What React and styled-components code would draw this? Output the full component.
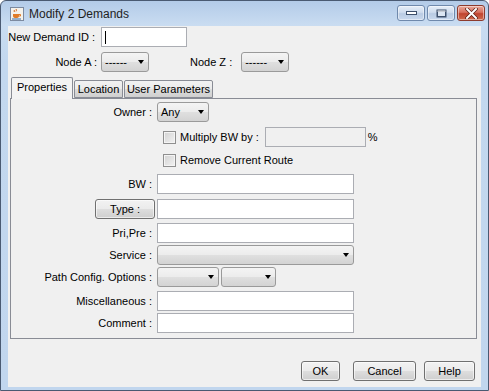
import React from 'react'
import styled, { createGlobalStyle } from 'styled-components'

const Global = createGlobalStyle`
  html, body { margin: 0; padding: 0; background: #fff; }
  body {
    font-family: "Liberation Sans", Arial, sans-serif;
    font-size: 11px;
    color: #000;
  }
  * { box-sizing: border-box; }
`

const Frame = styled.div`
  width: 489px;
  height: 391px;
  display: flex;
  flex-direction: column;
  border: 1px solid #4a5a72;
  border-radius: 6px 6px 0 0;
  background: linear-gradient(to bottom, #b3cbe8 0, #c9dcf1 24px, #c3d8ef 60px, #c1d6ee 100%);
`

const TitleBar = styled.div`
  height: 25px;
  display: flex;
  align-items: center;
  padding: 0 3px 0 9px;
  & > .title {
    margin-left: 5px;
    font-size: 12px;
    color: #1e1e1e;
    font-family: "Liberation Sans", Arial, sans-serif;
  }
`

const Controls = styled.div`
  margin-left: auto;
  display: flex;
  gap: 2px;
  align-self: flex-start;
  margin-top: 4px;
`

const CtrlButton = styled.div`
  width: 28px;
  height: 16px;
  border: 1px solid ${p => (p.$close ? '#8d3b2e' : '#6f89ac')};
  border-radius: 3px;
  display: flex;
  align-items: center;
  justify-content: center;
  background: ${p =>
    p.$close
      ? 'linear-gradient(to bottom, #e9a99b 0, #d7705e 45%, #c0442f 55%, #cf6a4e 100%)'
      : 'linear-gradient(to bottom, #e6eef8 0, #cfdcee 45%, #b9cbe3 55%, #c9d9ee 100%)'};
  box-shadow: inset 0 0 0 1px rgba(255, 255, 255, 0.45);
`

const Client = styled.div`
  flex: 1;
  margin: 0 7px 3px 7px;
  background: #f0f0f0;
  display: flex;
  flex-direction: column;
`

const TopForm = styled.div`
  display: grid;
  grid-template-columns: 93px auto;
  row-gap: 5px;
  margin-top: 1px;
  align-items: center;
`

const Label = styled.div`
  text-align: right;
  padding-right: ${p => p.$pr ?? 4}px;
  white-space: nowrap;
`

const TextField = styled.div`
  width: ${p => p.$w}px;
  height: ${p => p.$h ?? 20}px;
  background: ${p => (p.$disabled ? '#f0f0f0' : '#fff')};
  border: 1px solid #abadb3;
  position: relative;
`

const Caret = styled.span`
  position: absolute;
  left: 3px;
  top: 3px;
  width: 1px;
  height: 13px;
  background: #000;
`

const Combo = styled.div`
  width: ${p => p.$w}px;
  height: 20px;
  border: 1px solid #9a9a9a;
  border-radius: 3px;
  display: flex;
  align-items: center;
  padding-left: 3px;
  background: linear-gradient(to bottom, #f4f4f4 0, #ececec 48%, #dfdfdf 52%, #d3d3d3 100%);
  & > .arrow {
    margin-left: auto;
    margin-right: 4px;
    width: 0;
    height: 0;
    border-left: 3.5px solid transparent;
    border-right: 3.5px solid transparent;
    border-top: 4px solid #000;
  }
`

const NodeRow = styled.div`
  display: flex;
  align-items: center;
  & > .zlabel {
    margin-left: 41px;
    margin-right: 9px;
  }
`

const Tabs = styled.div`
  margin: 5px 4px 0 2px;
  display: flex;
  flex-direction: column;
`

const TabStrip = styled.div`
  display: flex;
  align-items: flex-end;
  height: 21px;
  padding-left: 1px;
  position: relative;
  z-index: 1;
`

const Tab = styled.div`
  width: ${p => p.$w}px;
  height: ${p => (p.$active ? 22 : 18)}px;
  margin-bottom: ${p => (p.$active ? -1 : 0)}px;
  margin-right: 1px;
  border: 1px solid #898c95;
  border-bottom: ${p => (p.$active ? 'none' : '1px solid #898c95')};
  border-radius: 2px 2px 0 0;
  display: flex;
  justify-content: center;
  padding-top: ${p => (p.$active ? 3 : 2)}px;
  background: ${p =>
    p.$active ? '#f3f3f3' : 'linear-gradient(to bottom, #f2f2f2 0, #ebebeb 48%, #dddddd 52%, #cfcfcf 100%)'};
`

const Panel = styled.div`
  height: 241px;
  border: 1px solid #898c95;
  background: #f0f0f0;
  padding-top: 3px;
`

const Row = styled.div`
  display: grid;
  grid-template-columns: 146px 1fr;
  align-items: center;
  height: 20px;
  margin-top: ${p => p.$mt ?? 0}px;
`

const CheckLine = styled.div`
  display: flex;
  align-items: center;
  padding-left: 6px;
  & > .pct { margin-left: 2px; }
`

const CheckBox = styled.span`
  width: 13px;
  height: 13px;
  border: 1px solid #8f8f8f;
  background: linear-gradient(to bottom right, #d2d2d2, #f2f2f2);
  box-shadow: inset 0 0 0 1px #f4f4f4;
  margin-right: 4px;
`

const CheckText = styled.span`
  margin-right: ${p => p.$mr ?? 0}px;
`

const PushButton = styled.div`
  width: ${p => p.$w}px;
  height: 20px;
  border: 1px solid #707070;
  border-radius: 3px;
  display: flex;
  align-items: center;
  justify-content: center;
  background: linear-gradient(to bottom, #f2f2f2 0, #ebebeb 48%, #dddddd 52%, #cfcfcf 100%);
  box-shadow: inset 0 0 0 1px rgba(255, 255, 255, 0.6);
  justify-self: end;
  margin-right: ${p => p.$mr ?? 0}px;
  margin-left: ${p => p.$ml ?? 0}px;
`

const ComboPair = styled.div`
  display: flex;
  gap: 2px;
`

const ButtonBar = styled.div`
  margin-top: auto;
  display: flex;
  justify-content: flex-end;
  padding: 0 6px 6px 0;
`

const JavaIcon = () => (
  <svg width="14" height="14" viewBox="0 0 14 14">
    <rect x="0.5" y="0.5" width="13" height="13" fill="#f4f1ea" stroke="#7c8aa0" />
    <path d="M4 3 q1 1 0 2 M6 2 q1 1.2 0 2.4" stroke="#d2691e" fill="none" strokeWidth="1" />
    <path d="M3 7 h6 v2 q0 2 -3 2 q-3 0 -3 -2 z" fill="#e07b27" />
    <path d="M9 7.5 h1.5 v1.5 h-1.5" stroke="#e07b27" fill="none" />
    <rect x="2" y="11.5" width="9" height="1" fill="#3a6ea5" />
  </svg>
)

const MinGlyph = () => (
  <svg width="11" height="6" viewBox="0 0 11 6">
    <rect x="0.5" y="1.5" width="10" height="3" fill="#fff" stroke="#3d4f6b" />
  </svg>
)

const MaxGlyph = () => (
  <svg width="11" height="9" viewBox="0 0 11 9">
    <rect x="0.5" y="0.5" width="10" height="8" fill="#3d4f6b" />
    <rect x="2" y="3" width="7" height="4" fill="#dce6f3" />
    <rect x="1.5" y="1.5" width="8" height="1.2" fill="#fff" />
  </svg>
)

const CloseGlyph = () => (
  <svg width="13" height="11" viewBox="0 0 13 11">
    <path d="M2 1 L11 10 M11 1 L2 10" stroke="#5a1f16" strokeWidth="3.4" strokeLinecap="square" />
    <path d="M2 1 L11 10 M11 1 L2 10" stroke="#fff" strokeWidth="2" strokeLinecap="square" />
  </svg>
)

const Arrow = () => <span className="arrow" />

export default function App() {
  return (
    <>
      <Global />
      <Frame>
        <TitleBar>
          <JavaIcon />
          <span className="title">Modify 2 Demands</span>
          <Controls>
            <CtrlButton><MinGlyph /></CtrlButton>
            <CtrlButton><MaxGlyph /></CtrlButton>
            <CtrlButton $close><CloseGlyph /></CtrlButton>
          </Controls>
        </TitleBar>
        <Client>
          <TopForm>
            <Label $pr={6}>New Demand ID :</Label>
            <TextField $w={86}><Caret /></TextField>
            <Label>Node A :</Label>
            <NodeRow>
              <Combo $w={48}>------<Arrow /></Combo>
              <span className="zlabel">Node Z :</span>
              <Combo $w={48}>------<Arrow /></Combo>
            </NodeRow>
          </TopForm>
          <Tabs>
            <TabStrip>
              <Tab $active $w={62}>Properties</Tab>
              <Tab $w={49}>Location</Tab>
              <Tab $w={89}>User Parameters</Tab>
            </TabStrip>
            <Panel>
              <Row>
                <Label $pr={5}>Owner :</Label>
                <Combo $w={52}>Any<Arrow /></Combo>
              </Row>
              <Row $mt={5}>
                <span />
                <CheckLine>
                  <CheckBox />
                  <CheckText $mr={6}>Multiply BW by :</CheckText>
                  <TextField $w={101} $disabled />
                  <span className="pct">%</span>
                </CheckLine>
              </Row>
              <Row $mt={3}>
                <span />
                <CheckLine>
                  <CheckBox />
                  <CheckText>Remove Current Route</CheckText>
                </CheckLine>
              </Row>
              <Row $mt={4}>
                <Label $pr={5}>BW :</Label>
                <TextField $w={197} />
              </Row>
              <Row $mt={5}>
                <PushButton $w={60} $mr={2}>Type :</PushButton>
                <TextField $w={197} />
              </Row>
              <Row $mt={4}>
                <Label $pr={5}>Pri,Pre :</Label>
                <TextField $w={197} />
              </Row>
              <Row $mt={2}>
                <Label $pr={5}>Service :</Label>
                <Combo $w={197}><Arrow /></Combo>
              </Row>
              <Row $mt={2}>
                <Label $pr={5}>Path Config. Options :</Label>
                <ComboPair>
                  <Combo $w={62}><Arrow /></Combo>
                  <Combo $w={55}><Arrow /></Combo>
                </ComboPair>
              </Row>
              <Row $mt={4}>
                <Label $pr={5}>Miscellaneous :</Label>
                <TextField $w={197} />
              </Row>
              <Row $mt={2}>
                <Label $pr={5}>Comment :</Label>
                <TextField $w={197} />
              </Row>
            </Panel>
          </Tabs>
          <ButtonBar>
            <PushButton $w={39}>OK</PushButton>
            <PushButton $w={63} $ml={13}>Cancel</PushButton>
            <PushButton $w={51} $ml={8}>Help</PushButton>
          </ButtonBar>
        </Client>
      </Frame>
    </>
  )
}
